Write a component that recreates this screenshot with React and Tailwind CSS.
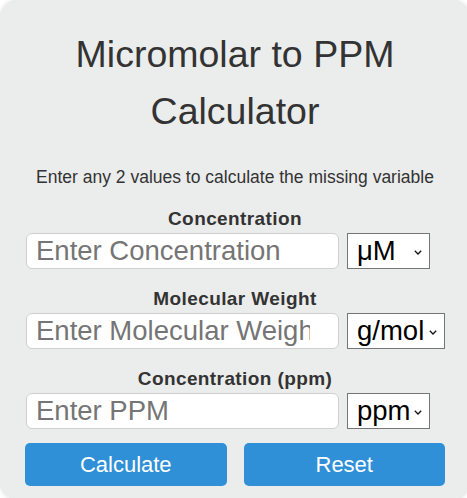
import React from "react";

function Chevron() {
  return (
    <svg
      className="pointer-events-none absolute right-[8px] top-[17px]"
      width="8"
      height="5"
      viewBox="0 0 8 5"
      fill="none"
    >
      <path d="M0.8 0.8 L4 4 L7.2 0.8" stroke="#111" strokeWidth="1.3" />
    </svg>
  );
}

function Field({ label, placeholder, unit, selWidth }) {
  return (
    <div className="flex flex-col">
      <label className="text-center text-[19px] leading-[22px] font-bold text-[#333] tracking-[0.4px]">
        {label}
      </label>
      <div className="mt-[3px] flex items-start gap-[8px] pl-[1px]">
        <input
          type="text"
          placeholder={placeholder}
          className="h-[36px] w-[313px] rounded-[6px] border border-[#cfcfcf] bg-white pl-[9px] pr-[28px] text-[27.5px] text-[#222] placeholder:text-[#757575] outline-none"
        />
        <div className={"relative " + selWidth}>
          <select className="h-[36px] w-full appearance-none rounded-none border border-[#767676] bg-white pl-[9px] pr-[10px] text-[27.5px] leading-[34px] text-black outline-none">
            <option>{unit}</option>
          </select>
          <Chevron />
        </div>
      </div>
    </div>
  );
}

export default function App() {
  return (
    <div
      className="h-[498px] w-[467px] overflow-hidden bg-white"
      style={{ fontFamily: '"Liberation Sans", Arial, sans-serif' }}
    >
      <div className="w-[470px] h-[500px] rounded-[20px] bg-[#ebecec] shadow-[0_0_5px_rgba(0,0,0,0.18)] px-[25px] pt-[26px]">
        <h1 className="text-center text-[37.5px] leading-[57px] font-normal text-[#333]">
          Micromolar to PPM Calculator
        </h1>
        <p className="mt-[25px] text-center text-[17.5px] leading-[24px] text-[#333]">
          Enter any 2 values to calculate the missing variable
        </p>
        <div className="mt-[19px] flex flex-col gap-[19px]">
          <Field label="Concentration" placeholder="Enter Concentration" unit="μM" selWidth="w-[83px]" />
          <Field label="Molecular Weight" placeholder="Enter Molecular Weight" unit="g/mol" selWidth="w-[98px]" />
          <Field label="Concentration (ppm)" placeholder="Enter PPM" unit="ppm" selWidth="w-[83px]" />
        </div>
        <div className="mt-[14px] flex gap-[17px]">
          <button className="h-[43px] w-[202px] rounded-[5px] bg-[#2f90d8] text-[22px] text-white">
            Calculate
          </button>
          <button className="h-[43px] w-[202px] rounded-[5px] bg-[#2f90d8] text-[22px] text-white">
            Reset
          </button>
        </div>
      </div>
    </div>
  );
}
